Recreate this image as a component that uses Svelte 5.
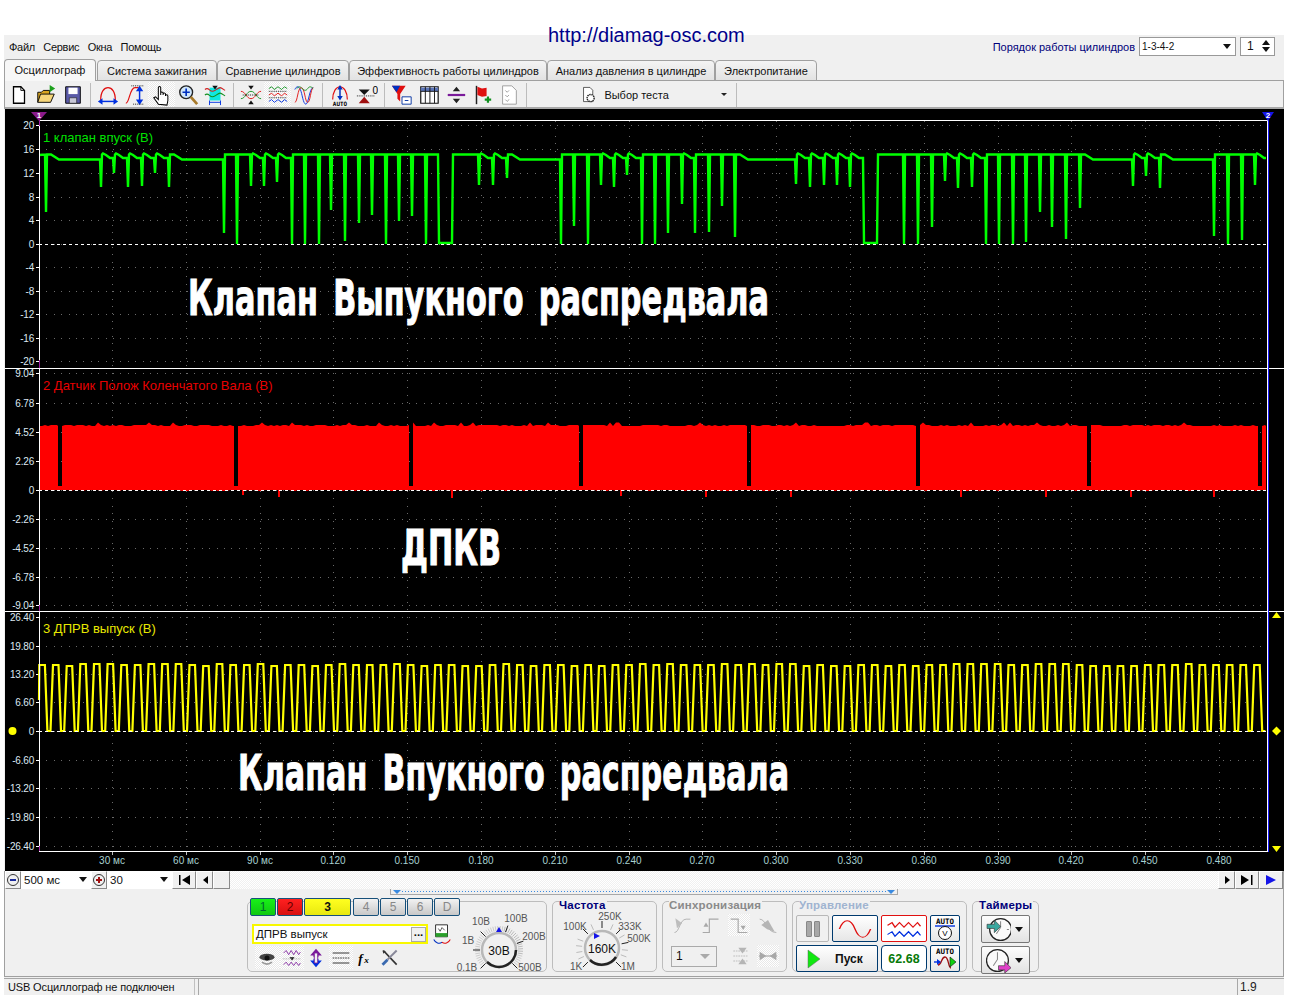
<script>
  // seeded noise so the traces stay the same on every load
  let seed = 7
  function rnd() {
    seed = (seed * 16807) % 2147483647
    return seed / 2147483647
  }

  const GX0 = 39, GX1 = 1267

  const panels = [
    { zero: 244, rows: [[125, '20'], [149, '16'], [173, '12'], [197, '8'], [220, '4'], [244, '0'], [267, '-4'], [291, '-8'], [314, '-12'], [338, '-16'], [361, '-20']] },
    { zero: 490, rows: [[373, '9.04'], [403, '6.78'], [432, '4.52'], [461, '2.26'], [490, '0'], [519, '-2.26'], [548, '-4.52'], [577, '-6.78'], [605, '-9.04']] },
    { zero: 731, rows: [[617, '26.40'], [646, '19.80'], [674, '13.20'], [702, '6.60'], [731, '0'], [760, '-6.60'], [788, '-13.20'], [817, '-19.80'], [846, '-26.40']] }
  ]

  const times = ['30 мс', '60 мс', '90 мс', '0.120', '0.150', '0.180', '0.210', '0.240', '0.270', '0.300', '0.330', '0.360', '0.390', '0.420', '0.450', '0.480']
  const gridX = times.map((_, i) => Math.round(112 + i * 73.8))

  const spikes = [[46,212],[101,187],[114,173],[128,187],[142,186],[155,173],[169,187],[224,233],[237,244],[251,186],[264,186],[277,182],[292,244],[305,244],[319,244],[331,210],[345,241],[359,223],[372,215],[386,244],[399,221],[412,216],[426,244],[479,185],[493,185],[507,178],[561,244],[574,226],[588,244],[601,185],[614,187],[627,175],[642,244],[655,244],[668,233],[682,204],[695,233],[709,232],[722,206],[735,237],[796,184],[810,187],[824,185],[837,185],[850,187],[904,244],[918,244],[932,227],[945,181],[958,188],[972,187],[986,244],[999,244],[1013,244],[1026,242],[1040,212],[1052,227],[1066,239],[1080,208],[1133,186],[1146,176],[1160,188],[1214,236],[1228,244],[1242,240],[1255,185]]
  const lows = [[439, 452], [864, 877]]

  function greenPath() {
    const items = [...spikes.map(([x, y]) => ({ a: x, b: x, y })), ...lows.map(([a, b]) => ({ a, b, y: 243, low: true }))].sort((p, q) => p.a - q.a)
    let d = `M${GX0} 155`
    let prev = { b: GX0, y: 155, low: true }
    for (const s of [...items, { a: GX1, b: GX1, y: 155, end: true }]) {
      const gap = s.a - prev.b
      let y = 154.5
      if (!prev.low && gap > 25) {
        d += ` L${prev.b + 5} 154.5 L${prev.b + 13} 159.5`
        y = 159.5
      } else if (!prev.low && prev.y < 205 && gap > 10) {
        d += ` L${prev.b + 2} 153.5 L${prev.b + 5} 155 L${prev.b + 9} 158`
        y = 158
      }
      d += ` L${s.a - 1} ${y}`
      if (s.end) break
      d += ` L${s.a} ${s.y}`
      if (s.b > s.a) d += ` L${s.b} ${s.y}`
      d += ` L${s.b + 1} 154.5`
      prev = s
    }
    return d
  }

  const redGaps = [60, 236, 411, 581, 749, 918, 1089, 1260]
  const redDips = [[242, 495], [278, 497], [451, 498], [620, 496], [705, 497], [790, 497], [960, 497], [1045, 497], [1130, 497], [1213, 497]]

  function redPath() {
    let d = ''
    let start = GX0
    for (const g of [...redGaps, GX1 + 3]) {
      const end = Math.min(g - 2, GX1 - 1)
      const tops = []
      const bots = []
      for (let x = start; x <= end; x += 3) {
        const r = rnd()
        tops.push(`${x} ${r > 0.93 ? 422.5 : r > 0.5 ? 425 : 426}`)
        bots.unshift(`${x} ${rnd() > 0.8 ? 491 : 490}`)
      }
      d += `M${tops.join(' L')} L${end} 426 L${end} 490 L${bots.join(' L')} Z `
      start = g + 2
      if (g < GX1) d += `M${g - 2} 486 L${g + 2} 486 L${g + 2} 490 L${g - 2} 490 Z `
    }
    for (const [x, y] of redDips) d += `M${x} 490 L${x + 2} 490 L${x + 2} ${y} L${x} ${y} Z `
    return d
  }

  function yellowPath() {
    let d = `M${GX0} 700 L${GX0 + 0.3} 665`
    for (let n = 0; n * 13.65 + 39.35 < GX1 - 2; n++) {
      const x = 39.35 + n * 13.65
      const top = 664 + Math.round(rnd() * 2)
      d += ` L${x.toFixed(1)} ${top} L${(x + 5.5).toFixed(1)} ${top}`
      if (x + 8 < GX1) d += ` L${(x + 8).toFixed(1)} 731 L${(x + 11.2).toFixed(1)} 731`
    }
    return d
  }

  const green = greenPath()
  const red = redPath()
  const yellow = yellowPath()

  const tabs = ['Осциллограф', 'Система зажигания', 'Сравнение цилиндров', 'Эффективность работы цилиндров', 'Анализ давления в цилиндре', 'Электропитание']
  const tabWidths = [92, 120, 132, 198, 168, 102]

  const icons = {
    doc: '<path d="M6 3h8l4 4v14H6z" fill="#fff" stroke="#000" stroke-width="1.4"/><path d="M14 3v4h4" fill="none" stroke="#000"/>',
    open: '<path d="M3 20V9h4l2-2h7v4" fill="#d9a520" stroke="#000"/><path d="M3 20l3-9h15l-4 9z" fill="#f6d67a" stroke="#000"/><path d="M16 1l6 4-6 4z" fill="#1ca01c"/>',
    save: '<path d="M4 3h16v18H4z" fill="#5a5aa8" stroke="#000"/><path d="M7 4h10v7H7z" fill="#fff"/><path d="M8 15h8v6H8z" fill="#c9c9d8" stroke="#222" stroke-width=".7"/>',
    arcw: '<path d="M4 18C4 8 8 4 12 4s8 4 8 14" fill="none" stroke="#e01010" stroke-width="1.4"/><path d="M4 19h16" stroke="#0030e0" stroke-width="1.6"/><path d="M1 19l5-3.5v7zM23 19l-5-3.5v7z" fill="#0030e0"/>',
    arch: '<path d="M2 21C6 21 6 4 12 4h4" fill="none" stroke="#e01010" stroke-width="1.3"/><path d="M17 6v13" stroke="#0030e0" stroke-width="1.6"/><path d="M17 2l-4 6h8zM17 23l-4-6h8z" fill="#0030e0"/><path d="M8 2h14M10 22h12" stroke="#111" stroke-dasharray="1 1"/>',
    hand: '<path d="M8 22l-5-7 2-1 3 3V4a1.3 1.3 0 0 1 2.6 0v8-2a1.3 1.3 0 0 1 2.6 0v2-1a1.3 1.3 0 0 1 2.6 0v2a1.3 1.3 0 0 1 2.6 0v5l-1 5z" fill="#fff" stroke="#000" stroke-width="1.1"/>',
    zoom: '<circle cx="10" cy="9" r="7" fill="#cfe6fb" stroke="#222" stroke-width="1.5"/><path d="M6 9h8M10 5v8" stroke="#0030c0" stroke-width="1.8"/><path d="M15 14l7 8" stroke="#a87a2a" stroke-width="3"/>',
    fitw: '<path d="M6 4h12v14H6z" fill="#10e8e0"/><path d="M1 6c5-4 5 5 11 1s5-4 11 0" fill="none" stroke="#d02020" stroke-width="1.2"/><path d="M1 12c5-4 5 5 11 1s5-4 11 0" fill="none" stroke="#109020" stroke-width="1.2"/><path d="M6 18v5M18 18v5M6 20h12" stroke="#0030e0"/><path d="M9 2h6l-3 4z" fill="#111"/>',
    cross: '<path d="M1 8c5 0 6 8 11 8s6-8 11-8" fill="none" stroke="#e01010"/><path d="M1 16c5 0 6-8 11-8s6 8 11 8" fill="none" stroke="#109020"/><path d="M9 2h6l-3 4zM9 22h6l-3-4z" fill="#111"/><path d="M3 12h18" stroke="#111" stroke-dasharray="1 1"/>',
    three: '<path d="M2 5l3-2 3 3 4-3 4 3 3-3 3 2" fill="none" stroke="#109020"/><path d="M2 12l3-2 3 3 4-3 4 3 3-3 3 2" fill="none" stroke="#e01010"/><path d="M2 19l3-2 3 3 4-3 4 3 3-3 3 2" fill="none" stroke="#0030e0"/><path d="M2 8h20M2 15h20" stroke="#111" stroke-dasharray="1 1"/>',
    over: '<path d="M2 6c2-4 4-4 6 0s3 16 6 16 4-18 8-18" fill="none" stroke="#0030e0"/><path d="M2 20c3 0 3-16 7-16s4 16 7 16 3-14 6-16" fill="none" stroke="#e01010"/><path d="M4 5c3-3 4-2 6 0s4 3 6 0 4-2 6 0" fill="none" stroke="#109020"/>',
    auto: '<path d="M4 17C4 8 8 3 12 3s8 5 8 14" fill="none" stroke="#e01010" stroke-width="1.3"/><path d="M12 3v13" stroke="#0030c0" stroke-width="1.6"/><path d="M12 1l-3 5h6zM12 18l-3-5h6z" fill="#0030c0"/><text x="12" y="24" font-size="6.5" font-weight="700" text-anchor="middle" font-family="DejaVu Sans Mono">AUTO</text>',
    zero: '<path d="M3 6h12l-6 6z" fill="#111"/><path d="M3 21h12l-6-7z" fill="#a01010"/><path d="M1 13h20" stroke="#111" stroke-dasharray="1 1"/><text x="18" y="11" font-size="11" font-family="Liberation Sans">0</text>',
    filter: '<path d="M1 2h15l-6 9v8l-3-3v-5z" fill="#e01010"/><path d="M1 2h9l-4 7z" fill="#0030c0"/><path d="M12 14h10v8H12z" fill="#fff" stroke="#0030a0"/><path d="M15 18h4" stroke="#0030a0"/>',
    table: '<path d="M3 3h19v18H3z" fill="#fff" stroke="#111" stroke-width="1.3"/><path d="M3 4h19v4H3z" fill="#5a74b8"/><path d="M8 3v18M13 3v18M18 3v18M3 8h19" stroke="#111"/>',
    split: '<path d="M3 12h19" stroke="#7a1a9a" stroke-width="2.4"/><path d="M12.5 3l-4 5h8zM12.5 21l-4-5h8z" fill="#222"/>',
    flag: '<path d="M6 2v20" stroke="#222" stroke-width="1.6"/><path d="M7 3l5 2 5-1v9l-5 1-5-2z" fill="#e01010"/><path d="M15 17h7M18.5 13.5v7" stroke="#109020" stroke-width="2.4"/>',
    sheet: '<path d="M5 2h10l5 5v15H5z" fill="#fff" stroke="#999"/><path d="M8 7l2 2 2-2M8 12l2 2 2-2M8 17l2 2 2-2" fill="none" stroke="#999"/>',
    gear: '<path d="M5 2h9l4 4v16H5z" fill="#fff" stroke="#222"/><circle cx="15" cy="17" r="5" fill="#fff" stroke="#222" stroke-width="2" stroke-dasharray="2 1"/>',
    eye: '<ellipse cx="12" cy="11" rx="9" ry="4" fill="#444"/><circle cx="12" cy="12" r="3" fill="#111"/><path d="M6 17c4 3 8 3 12 0" stroke="#999" fill="none" stroke-width="2"/>',
    wave2: '<path d="M2 6l3-3 3 5 3-5 3 5 3-5 3 5 2-3" fill="none" stroke="#7a1a9a"/><path d="M2 20l3-3 3 4 3-4 3 4 3-4 3 4 2-3" fill="none" stroke="#7a1a9a"/><path d="M9 11h6l-3 4z" fill="#111"/><path d="M1 13h22" stroke="#999" stroke-dasharray="1 1"/>',
    updown: '<path d="M12 1l7 8h-4v2H9V9H5z" fill="#7a1a9a"/><path d="M12 23l7-8h-4v-2H9v2H5z" fill="#0030e0"/><path d="M10 6h4v12h-4z" fill="#f0f0f0" stroke="#7a1a9a"/>',
    lines: '<path d="M2 6h20M2 18h20" stroke="#111"/><path d="M2 12h20" stroke="#111" stroke-dasharray="2 1"/>',
    fx: '<text x="4" y="18" font-size="16" font-weight="700" font-style="italic" font-family="Liberation Serif">f</text><text x="11" y="18" font-size="11" font-weight="700" font-style="italic" font-family="Liberation Serif">x</text>',
    tools: '<path d="M4 3l16 17" stroke="#333" stroke-width="2"/><path d="M20 3L9 14" stroke="#889" stroke-width="2.4"/><path d="M9 14l-6 6" stroke="#3a6ab0" stroke-width="3.4"/><path d="M3 3l4 1-3 3z" fill="#333"/>',
    scan: '<path d="M5 2h13v13H5z" fill="#fff" stroke="#222"/><path d="M5 11h13v4H5z" fill="#2aa02a"/><path d="M8 6l2 3 2-4 3 3" fill="none" stroke="#222" stroke-width=".8"/><path d="M3 18c2 4 6 5 9 3" fill="none" stroke="#0030c0" stroke-width="1.2"/><path d="M21 18c-2 4-6 5-9 3" fill="none" stroke="#e01010" stroke-width="1.2"/>',
    sEdge: '<path d="M3 21c6 0 6-16 14-16h5" fill="none" stroke="#a8a8a8"/><path d="M4 4l8 6-6 6z" fill="#bdbdbd"/>',
    sUp: '<path d="M2 21h8V5h11" fill="none" stroke="#a8a8a8" stroke-width="1.4"/><path d="M6 9l-3 5h6z" fill="#a8a8a8"/>',
    sDown: '<path d="M2 5h9v16h11" fill="none" stroke="#a8a8a8" stroke-width="1.4"/><path d="M17 18l-3-5h6z" fill="#a8a8a8"/>',
    sSlope: '<path d="M2 5c8 0 8 16 20 16" fill="none" stroke="#a8a8a8"/><path d="M4 12l8-6 8 14-9-3z" fill="#b5b5b5"/>',
    sMid: '<path d="M4 6h18M4 12h18M4 18h18" stroke="#b5b5b5" stroke-dasharray="2 1"/><path d="M10 2h10l-5 7zM10 22h10l-5-7z" fill="#b5b5b5"/>',
    sIn: '<path d="M1 12h22" stroke="#a8a8a8" stroke-width="1.4"/><path d="M2 7l8 5-8 5zM22 7l-8 5 8 5z" fill="#a8a8a8"/>',
    sine: '<path d="M1 12C4 0 9 0 12 12s8 12 11 0" fill="none" stroke="#e01010" stroke-width="1.1"/>',
    dual: '<path d="M1 8l3-3 2 5 3-5 3 5 3-5 3 5 3-5 2 4" fill="none" stroke="#e01010"/><path d="M1 18l3-3 2 5 3-5 3 5 3-5 3 5 3-5 2 4" fill="none" stroke="#0030e0"/>',
    autoV: '<text x="12" y="7" font-size="7.5" font-weight="700" text-anchor="middle" font-family="DejaVu Sans Mono">AUTO</text><path d="M2 9h20" stroke="#0030e0" stroke-width="1.4"/><circle cx="12" cy="16" r="6.5" fill="#fff" stroke="#111"/><text x="12" y="19" font-size="8" text-anchor="middle" font-family="Liberation Sans">V</text>',
    autoT: '<text x="12" y="7" font-size="7.5" font-weight="700" text-anchor="middle" font-family="DejaVu Sans Mono">AUTO</text><path d="M5 18c4 0 3-8 7-8s3 11 6 11" fill="none" stroke="#a01010" stroke-width="1.3"/><path d="M1 15h6" stroke="#0030e0" stroke-width="1.4"/><path d="M8 15l-4-3v6z" fill="#0030e0"/><path d="M17 10l6 5-6 5z" fill="#10d010" stroke="#111" stroke-width=".6"/>',
    timerA: '<circle cx="14" cy="12" r="10.5" fill="#fafafa" stroke="#222" stroke-width="1.2"/><path d="M14 4v6l-4 6M22 12h-2" fill="none" stroke="#888"/><path d="M1 7h7V3l6 6-6 6v-4H1z" fill="#3aa8a0" stroke="#333" stroke-width=".6"/>',
    timerB: '<circle cx="11" cy="12" r="10.5" fill="#fafafa" stroke="#222" stroke-width="1.2"/><path d="M11 4v7l-4 6" fill="none" stroke="#888"/><path d="M12 17h6v-4l6 6-6 5v-3h-6z" fill="#e040c8" stroke="#333" stroke-width=".6"/>'
  }

  const toolbar = [
    ['doc', 'open', 'save'],
    ['arcw', 'arch', 'hand', 'zoom', 'fitw'],
    ['cross', 'three', 'over'],
    ['auto', 'zero'],
    ['filter', 'table', 'split', 'flag', 'sheet']
  ]
  const pressed = ['hand', 'three']

  const channels = [
    { label: '1', cls: 'c1' }, { label: '2', cls: 'c2' }, { label: '3', cls: 'c3' },
    { label: '4', cls: 'off' }, { label: '5', cls: 'off' }, { label: '6', cls: 'off' }, { label: 'D', cls: 'off' }
  ]

  function radial(cx, cy, deg, r1, r2) {
    const a = (deg * Math.PI) / 180
    return `M${(cx + r1 * Math.sin(a)).toFixed(1)} ${(cy - r1 * Math.cos(a)).toFixed(1)} L${(cx + r2 * Math.sin(a)).toFixed(1)} ${(cy - r2 * Math.cos(a)).toFixed(1)}`
  }
  const fine = Array.from({ length: 46 }, (_, i) => -135 + i * 6)
  const voltMajor = [-135, -90, -45, 20, 70, 135]
  const freqMajor = [-135, -45, 0, 45, 78, 135]
  const freqMinor = [-115, -100, -85, -70, 95, 110, 60, 25, -25]
</script>

<div class="app">
  <a class="site" href="http://diamag-osc.com">http://diamag-osc.com</a>

  <div class="menubar">
    <nav class="menu">
      <span>Файл</span><span>Сервис</span><span>Окна</span><span>Помощь</span>
    </nav>
    <div class="order">
      <span class="order-label">Порядок работы цилиндров</span>
      <div class="combo order-combo"><span>1-3-4-2</span><i class="tri"></i></div>
      <div class="combo spin"><span>1</span><b class="spin-arrows"><i class="up"></i><i class="tri"></i></b></div>
    </div>
  </div>

  <div class="tabs">
    {#each tabs as tab, i}
      <div class="tab" class:active={i === 0} style="width: {tabWidths[i]}px">{tab}</div>
    {/each}
  </div>

  <div class="toolbar">
    {#each toolbar as group}
      <div class="tb-group">
        {#each group as name}
          <span class="tb-btn" class:pressed={pressed.includes(name)}>
            <svg viewBox="0 0 24 24" width="22" height="22">{@html icons[name]}</svg>
          </span>
        {/each}
      </div>
      <i class="tb-sep"></i>
    {/each}
    <div class="test-pick">
      <svg viewBox="0 0 24 24" width="17" height="19">{@html icons.gear}</svg>
      <span>Выбор теста</span>
      <i class="tri small"></i>
    </div>
    <i class="tb-sep flush"></i>
  </div>

  <svg class="scope" viewBox="5 109 1279 762" width="1279" height="762">
    <rect x="5" y="109" width="1279" height="762" fill="#000" />

    <g shape-rendering="crispEdges">
      {#each panels as p}
        {#each p.rows as [y]}
          <path d="M{GX0} {y + 0.5} H{GX1}" stroke="#6a6a6a" stroke-dasharray="1 6.4" />
          <path d="M36 {y + 0.5} H{GX0}" stroke="#fff" />
        {/each}
      {/each}
      {#each gridX as x}
        <path d="M{x + 0.5} 121 V851" stroke="#6a6a6a" stroke-dasharray="1 6.4" />
        <path d="M{x + 0.5} 851 V855" stroke="#bbb" />
      {/each}
    </g>

    <text class="big" x="188" y="315" textLength="581" lengthAdjust="spacingAndGlyphs">Клапан Выпукного распредвала</text>
    <text class="big" x="401" y="565" textLength="100" lengthAdjust="spacingAndGlyphs">ДПКВ</text>
    <text class="big" x="238" y="790" textLength="551" lengthAdjust="spacingAndGlyphs">Клапан Впукного распредвала</text>

    <path d={red} fill="#ff0000" />
    <path d={green} fill="none" stroke="#00ff00" stroke-width="2.4" stroke-linejoin="miter" />
    <path d={yellow} fill="none" stroke="#ffff00" stroke-width="2.2" />

    <g shape-rendering="crispEdges">
      {#each panels as p}
        <path d="M{GX0} {p.zero + 0.5} H{GX1}" stroke="#fff" stroke-dasharray="3 3" />
      {/each}
      <path d="M{GX0} 120.5 H1269" stroke="#fff" />
      <path d="M{GX0} 851.5 H1269" stroke="#fff" />
      <path d="M5 368.5 H1284" stroke="#fff" />
      <path d="M5 611.5 H1284" stroke="#fff" />
      <path d="M{GX0 + 0.5} 120 V852" stroke="#fff" />
      <path d="M1267.5 120 V852" stroke="#fff" />
      <path d="M1268.5 120 V852" stroke="#1a1aff" />
      <path d="M39.5 120 V126 M39.5 360 V368 M39.5 605 V611 M39.5 846 V851" stroke="#a020a0" />
    </g>

    {#each panels as p}
      {#each p.rows as [y, label]}
        <text class="axis" x="34" y={y + 4}>{label}</text>
      {/each}
    {/each}

    {#each times as t, i}
      <text class="time" x={gridX[i]} y="864">{t}</text>
    {/each}

    <text class="trace" x="43" y="142" fill="#00e000">1 клапан впуск (В)</text>
    <text class="trace" x="43" y="390" fill="#e80000">2 Датчик Полож Коленчатого Вала (В)</text>
    <text class="trace" x="43" y="633" fill="#e8e800">3 ДПРВ выпуск (В)</text>

    <path d="M31 112 H47 L39 121 Z" fill="#8a1a8a" />
    <text class="mark" x="39" y="118">1</text>
    <path d="M1262 112 H1274 L1268 121 Z" fill="#1414e8" />
    <text class="mark" x="1268" y="118">2</text>

    <circle cx="12.5" cy="731" r="4" fill="#ffff00" />
    <path d="M1272 618 L1276.5 612 L1281 618 Z" fill="#ffff00" />
    <path d="M1276.5 726.5 L1281 731 L1276.5 735.5 L1272 731 Z" fill="#ffff00" />
    <path d="M1272 846 H1281 L1276.5 852 Z" fill="#ffff00" />
  </svg>

  <div class="lower">
    <div class="scroll-row">
      <span class="round-btn"><i class="round minus"></i></span>
      <div class="zoom-combo wide"><span>500 мс</span><i class="tri"></i></div>
      <span class="round-btn"><i class="round plus"></i></span>
      <div class="zoom-combo wider"><span>30</span><i class="tri"></i></div>
      <span class="nav wide-nav"><svg viewBox="0 0 12 10" width="12" height="10"><path d="M1 0v10h1.5V0zM12 0v10L4 5z" /></svg></span>
      <span class="nav"><svg viewBox="0 0 8 10" width="8" height="10"><path d="M7 1v8L2 5z" /></svg></span>
      <span class="nav"></span>
      <div class="track"></div>
      <span class="nav"><svg viewBox="0 0 8 10" width="8" height="10"><path d="M2 1v8l5-4z" /></svg></span>
      <span class="nav wide-nav"><svg viewBox="0 0 12 10" width="12" height="10"><path d="M0 0v10l8-5zM10 0v10h1.5V0z" /></svg></span>
      <span class="nav wide-nav"><svg viewBox="0 0 12 10" width="12" height="10"><path d="M1 0v10l10-5z" fill="#1414e8" /></svg></span>
    </div>

    <div class="slider"><i class="slider-tri"></i><i class="slider-dots"></i><i class="slider-tri"></i></div>

    <div class="panels">
      <section class="group channel">
        <div class="chan-btns">
          {#each channels as c}
            <span class="chan {c.cls}">{c.label}</span>
          {/each}
        </div>
        <div class="chan-body">
          <div class="chan-left">
            <div class="chan-input">
              <div class="chan-name"><span>ДПРВ выпуск</span><span class="dots">...</span></div>
              <svg viewBox="0 0 24 24" width="22" height="22">{@html icons.scan}</svg>
            </div>
            <div class="chan-tools">
              {#each ['eye', 'wave2', 'updown', 'lines', 'fx', 'tools'] as name}
                <span class="ct-btn" class:pressed={name === 'eye' || name === 'wave2' || name === 'lines'}>
                  <svg viewBox="0 0 24 24" width="20" height="20">{@html icons[name]}</svg>
                </span>
              {/each}
            </div>
          </div>
          <svg class="knob" viewBox="0 -4 90 68" width="90" height="68">
            {#each fine as deg}
              <path d={radial(43, 35, deg, 19, 24)} stroke={deg > 10 && deg < 100 ? '#bbb' : '#ccc'} />
            {/each}
            {#each voltMajor as deg}
              <path d={radial(43, 35, deg, 19, 26)} stroke="#222" />
            {/each}
            <circle cx="43" cy="35" r="17" fill="#f0f0f0" stroke="#b8b8b8" stroke-width="2.5" />
            <path d="M60 35 A17 17 0 0 1 31 47" fill="none" stroke="#222" stroke-width="2.5" />
            <path d="M40 17l3-5 3 5z" fill="#1414e8" />
            <text class="k-val" x="43" y="40">30В</text>
            <text class="k-lab" x="25" y="10">10В</text>
            <text class="k-lab" x="60" y="7">100В</text>
            <text class="k-lab" x="12" y="29">1В</text>
            <text class="k-lab" x="78" y="25">200В</text>
            <text class="k-lab" x="11" y="56">0.1В</text>
            <text class="k-lab" x="74" y="56">500В</text>
          </svg>
        </div>
      </section>

      <section class="group freq">
        <h3 class="title navy">Частота</h3>
        <svg class="knob" viewBox="0 -4 105 64" width="105" height="64">
          {#each freqMinor as deg}
            <path d={radial(50, 34, deg, 20, 26)} stroke="#bbb" />
          {/each}
          {#each freqMajor as deg}
            <path d={radial(50, 34, deg, 20, 27)} stroke="#222" />
          {/each}
          <circle cx="50" cy="34" r="17" fill="#f0f0f0" stroke="#b8b8b8" stroke-width="2.5" />
          <path d="M64 43 A17 17 0 0 1 38 46" fill="none" stroke="#222" stroke-width="2.5" />
          <path d="M42 19l6 3-6 3z" fill="#1414e8" />
          <text class="k-val" x="50" y="39">160K</text>
          <text class="k-lab" x="58" y="6">250K</text>
          <text class="k-lab" x="23" y="16">100K</text>
          <text class="k-lab" x="78" y="16">333K</text>
          <text class="k-lab" x="87" y="28">500K</text>
          <text class="k-lab" x="24" y="56">1K</text>
          <text class="k-lab" x="76" y="56">1M</text>
        </svg>
      </section>

      <section class="group sync">
        <h3 class="title gray">Синхронизация</h3>
        <div class="sync-row top">
          {#each ['sEdge', 'sUp', 'sDown', 'sSlope'] as name}
            <span class="s-btn" class:pressed={name === 'sDown'}><svg viewBox="0 0 24 24" width="20" height="20">{@html icons[name]}</svg></span>
          {/each}
        </div>
        <div class="sync-row second">
          <div class="sync-combo"><span>1</span><i class="tri grey"></i></div>
          <span class="s-btn"><svg viewBox="0 0 24 24" width="20" height="20">{@html icons.sMid}</svg></span>
          <span class="s-btn pressed"><svg viewBox="0 0 24 24" width="20" height="20">{@html icons.sIn}</svg></span>
        </div>
      </section>

      <section class="group control">
        <h3 class="title pale">Управление</h3>
        <div class="ctl-grid">
          <span class="ctl pause"><i></i><i></i></span>
          <span class="ctl"><svg viewBox="0 0 24 24" width="34" height="22" preserveAspectRatio="none">{@html icons.sine}</svg></span>
          <span class="ctl red"><svg viewBox="0 0 24 24" width="36" height="22" preserveAspectRatio="none">{@html icons.dual}</svg></span>
          <span class="ctl"><svg viewBox="0 0 24 24" width="24" height="24">{@html icons.autoV}</svg></span>
          <span class="ctl start"><svg viewBox="0 0 14 20" width="14" height="20"><path d="M1 1l12 9-12 9z" fill="#10e810" stroke="#666" stroke-width=".5" /></svg><b>Пуск</b></span>
          <span class="ctl rpm">62.68</span>
          <span class="ctl"><svg viewBox="0 0 24 24" width="24" height="24">{@html icons.autoT}</svg></span>
        </div>
      </section>

      <section class="group timers">
        <h3 class="title navy">Таймеры</h3>
        <div class="timer-btn first"><svg viewBox="0 0 24 24" width="25" height="25">{@html icons.timerA}</svg><i class="tri"></i></div>
        <div class="timer-btn"><svg viewBox="0 0 24 24" width="25" height="25">{@html icons.timerB}</svg><i class="tri"></i></div>
      </section>
    </div>
  </div>

  <footer class="status">
    <span class="st-main">USB Осциллограф не подключен</span>
    <span class="st-fill"></span>
    <span class="st-ver">1.9</span>
  </footer>
</div>

<style>
  :global(body) { background: #fff; }

  .app {
    position: relative;
    width: 1280px;
    margin: 35px 0 0 4px;
    background: #f0f0f0;
    font: 11px "Liberation Sans", Arial, sans-serif;
    color: #111;
  }
  i { display: block; font-style: normal; }

  .site {
    position: absolute;
    left: 544px;
    top: -11px;
    font-size: 20px;
    color: #00008b;
    text-decoration: none;
  }

  .tri { width: 0; height: 0; border: 4px solid transparent; border-top: 5px solid #111; border-bottom: 0; }
  .tri.small { border-width: 3px 3px 0; border-top-color: #222; }
  .tri.grey { border-top-color: #aaa; border-width: 5px 5px 0; }

  .menubar { height: 24px; display: flex; justify-content: space-between; align-items: center; }
  .menu { display: flex; gap: 8.5px; padding: 0 0 0 5px; letter-spacing: -0.3px; }
  .order { display: flex; align-items: center; gap: 4px; margin-right: 9px; padding-bottom: 2px; }
  .order-label { color: #00007a; margin-top: 1px; margin-left: 1px; }
  .combo {
    height: 19px;
    box-sizing: border-box;
    background: #fff;
    border: 1px solid #999;
    display: flex;
    align-items: center;
    justify-content: space-between;
    padding: 0 4px 0 2px;
  }
  .order-combo { width: 97px; font-size: 10px; }
  .spin { width: 35px; font-size: 12px; padding: 0 4px 0 6px; }
  .spin-arrows { display: flex; flex-direction: column; gap: 2px; }
  .up { width: 0; height: 0; border: 4px solid transparent; border-bottom: 5px solid #111; border-top: 0; }

  .tabs { height: 22px; display: flex; align-items: flex-end; box-shadow: inset 0 -1px #a0a0a0; }
  .tab {
    height: 21px;
    box-sizing: border-box;
    border: 1px solid #a0a0a0;
    border-radius: 4px 4px 0 0;
    background: linear-gradient(#f4f4f4, #e2e2e2);
    text-align: center;
    line-height: 20px;
    white-space: nowrap;
  }
  .tab.active { height: 22px; background: #f7f7f7; border-bottom: 0; margin-right: 1px; }

  .toolbar {
    height: 28px;
    box-sizing: border-box;
    display: flex;
    align-items: center;
    padding: 1px 0 0 1px;
    border-bottom: 2px solid #a8a8a8;
    border-left: 1px solid #a0a0a0;
    border-right: 1px solid #a0a0a0;
  }
  .tb-group { display: flex; }
  .tb-btn { width: 26.7px; height: 25px; display: flex; align-items: center; justify-content: center; }
  .pressed { background: repeating-conic-gradient(#fff 0 25%, #e8e8e8 0 50%) 0 0 / 2px 2px; }
  .tb-sep { width: 1px; height: 24px; background: #bcbcbc; margin: 0 4px; }
  .tb-sep.flush { margin: 0; }
  .test-pick { width: 205px; display: flex; align-items: center; padding-left: 49px; box-sizing: border-box; gap: 7px; }
  .test-pick span { width: 110px; font-size: 11px; }

  .scope { display: block; margin-left: 1px; width: 1279px; height: 762px; font-family: "Liberation Sans", Arial, sans-serif; }
  .big {
    font: bold 50px "Liberation Sans Narrow", "DejaVu Sans Condensed", sans-serif;
    fill: #fff;
    stroke: #fff;
    stroke-width: 1;
    word-spacing: 7px;
  }
  .axis { font-size: 10px; letter-spacing: -0.2px; fill: #dde8f0; text-anchor: end; }
  .time { font-size: 10px; fill: #a8d0d0; text-anchor: middle; }
  .trace { font-size: 13px; }
  .mark { font-size: 8px; font-weight: 700; fill: #fff; text-anchor: middle; }

  .lower {
    height: 105px;
    border-left: 1px solid #a0a0a0;
    border-right: 1px solid #a0a0a0;
    border-bottom: 1px solid #a0a0a0;
  }
  .scroll-row { height: 18px; display: flex; background: #fff; }
  .round-btn, .nav {
    height: 18px;
    box-sizing: border-box;
    background: #f0f0f0;
    border: 1px solid;
    border-color: #fff #8a8a8a #8a8a8a #fff;
    display: flex;
    align-items: center;
    justify-content: center;
    flex: none;
  }
  .round-btn { width: 16px; }
  .round { width: 12px; height: 12px; box-sizing: border-box; border: 1px solid #333; border-radius: 50%; background: linear-gradient(#1a2a9a, #1a2a9a) center / 6px 2px no-repeat; }
  .round.plus { background: linear-gradient(#a01010, #a01010) center / 2px 6px no-repeat, linear-gradient(#a01010, #a01010) center / 6px 2px no-repeat; }
  .zoom-combo { display: flex; align-items: center; justify-content: space-between; font-size: 11.5px; padding: 0 4px 1px 3px; box-sizing: border-box; height: 18px; background: #fff; }
  .zoom-combo.wide { width: 70px; }
  .zoom-combo.wider { width: 65px; }
  .nav { width: 17px; }
  .nav.wide-nav { width: 24px; }
  .track { flex: 1; background: repeating-conic-gradient(#fff 0 25%, #f0f0f0 0 50%) 0 0 / 2px 2px; }

  .slider {
    width: 508px;
    height: 7px;
    margin: -1px 0 0 385px;
    box-sizing: border-box;
    border: 1px solid #a8a8a8;
    display: flex;
    align-items: center;
    gap: 1px;
    padding: 0 2px;
  }
  .slider-dots { flex: 1; height: 1px; background: repeating-linear-gradient(90deg, #3a8ae0 0 1px, transparent 1px 3px); }
  .slider-tri { width: 0; height: 0; border: 4px solid transparent; border-top: 4px solid #3a8ae0; border-bottom: 0; }

  .panels { display: flex; gap: 5px; padding: 6px 0 0 242px; }
  .group { height: 71px; box-sizing: border-box; border: 1px solid #bdbdbd; border-radius: 5px; }
  .title {
    margin: -3px 0 0 6px;
    width: fit-content;
    background: #f0f0f0;
    font-size: 11.5px;
    font-weight: 700;
    line-height: 12px;
    letter-spacing: 0.2px;
    padding-right: 1px;
  }
  .navy { color: #00007a; }
  .gray { color: #8a8a8a; }
  .pale { color: #a0b4d0; }

  .channel { width: 300px; }
  .chan-btns { display: flex; gap: 1px; margin: -4px 0 0 2px; }
  .chan {
    width: 26px;
    height: 18px;
    box-sizing: border-box;
    border: 1px solid #17507a;
    border-radius: 2px;
    text-align: center;
    line-height: 16px;
    font-size: 12px;
  }
  .c1 { background: linear-gradient(#18f018, #10c810); color: #063; }
  .c2 { background: linear-gradient(#ff2020, #d81010); color: #600; }
  .c3 { width: 47px; background: linear-gradient(#ffff20, #e8e810); font-weight: 700; margin-right: 1px; }
  .off { background: linear-gradient(#f2f2f2, #c8c8c8); color: #888; }
  .chan-body { display: flex; }
  .chan-left { width: 212px; }
  .chan-input { display: flex; align-items: center; gap: 3px; margin: 8px 0 0 4px; height: 20px; }
  .chan-name {
    width: 176px;
    height: 20px;
    box-sizing: border-box;
    border: 2px solid #f8f800;
    background: #fff;
    display: flex;
    align-items: center;
    justify-content: space-between;
    padding-left: 2px;
    font-size: 11.5px;
  }
  .dots { width: 15px; height: 15px; line-height: 9px; text-align: center; background: #f0f0f0; border: 1px solid #aaa; box-sizing: border-box; font-weight: 700; }
  .chan-tools { display: flex; margin: 2px 0 0 7px; }
  .ct-btn { width: 24.5px; height: 23px; display: flex; align-items: center; justify-content: center; }
  .knob { display: block; }
  .channel .knob { margin: -5px 0 0 -4px; }
  .k-val { font-size: 12px; text-anchor: middle; fill: #111; }
  .k-lab { font-size: 10px; text-anchor: middle; fill: #555; }

  .freq { width: 105px; }
  .freq .knob { margin: -1px 0 0 -1px; }

  .sync { width: 125px; }
  .sync-row { display: flex; align-items: center; gap: 6px; margin: 3px 0 0 8px; }
  .sync-row.top { gap: 6.5px; margin: 3px 0 0 8px; }
  .sync-row.second { margin-top: 9px; }
  .s-btn { width: 22px; height: 22px; display: flex; align-items: center; justify-content: center; }
  .sync-combo {
    width: 46px;
    height: 21px;
    box-sizing: border-box;
    border: 1px solid #aaa;
    display: flex;
    align-items: center;
    justify-content: space-between;
    padding: 0 6px 0 4px;
    font-size: 12px;
    margin-right: 6px;
  }

  .control { width: 175px; }
  .ctl-grid { display: grid; grid-template-columns: 33px 46px 46px 30px; grid-template-rows: 27px 27px; gap: 3px; margin: 4px 0 0 3px; }
  .ctl {
    box-sizing: border-box;
    border: 1px solid #003a6e;
    border-radius: 2px;
    background: linear-gradient(#fff, #e6e6e6);
    display: flex;
    align-items: center;
    justify-content: center;
  }
  .ctl.pause { gap: 2px; border-color: #b8b8b8; background: #f0f0f0; }
  .pause i { width: 4px; height: 14px; background: #a8a8a8; border: 1px solid #888; border-radius: 1px; }
  .ctl.red { border-color: #e01010; background: #fff; }
  .ctl.start { grid-column: 1 / 3; justify-content: flex-start; padding-left: 10px; gap: 14px; border-width: 1.5px; }
  .start b { font-size: 12px; }
  .ctl.rpm { color: #087a08; font-size: 12.5px; font-weight: 700; background: #fff; border-radius: 4px; }

  .timers { width: 67px; }
  .timer-btn {
    width: 49px;
    height: 28px;
    box-sizing: border-box;
    margin: 3px 0 0 8px;
    border: 1px solid #777;
    border-radius: 2px;
    background: linear-gradient(#fdfdfd, #e2e2e2);
    display: flex;
    align-items: center;
    gap: 4px;
    padding-left: 4px;
  }
  .timer-btn.first { margin-top: 4px; }

  .status { height: 17px; box-sizing: border-box; display: flex; border-top: 1px solid #a8a8a8; margin-top: 1px; font-size: 11px; line-height: 17px; }
  .st-main { width: 186px; padding-left: 4px; flex: none; border-right: 1px solid #c0c0c0; letter-spacing: -0.14px; }
  .st-fill { flex: 1; border-left: 1px solid #a8a8a8; margin-left: 3px; }
  .st-ver { width: 47px; padding-left: 2px; box-sizing: border-box; border-left: 1px solid #a8a8a8; color: #222; font-size: 12px; }
</style>
